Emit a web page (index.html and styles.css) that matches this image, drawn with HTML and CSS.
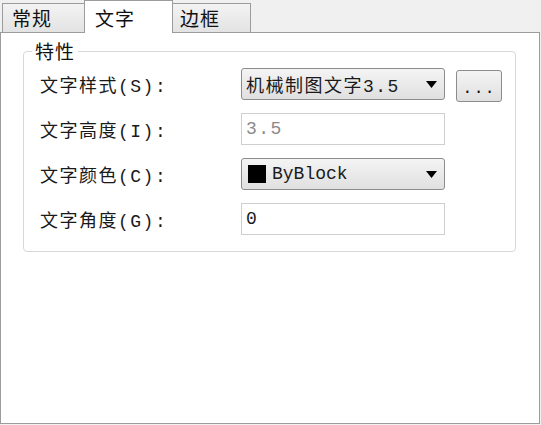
FILE: index.html
```html
<!DOCTYPE html>
<html lang="zh-CN">
<head>
<meta charset="utf-8">
<title>文字</title>
<link rel="stylesheet" href="styles.css">
</head>
<body>
<div class="dialog">
  <div class="tabs">
    <div class="tab tab-general">常规</div>
    <div class="tab tab-text active">文字</div>
    <div class="tab tab-border">边框</div>
  </div>
  <div class="panel">
    <fieldset class="group">
      <legend class="group-title">特性</legend>
      <div class="form">
        <div class="label">文字样式(S):</div>
        <div class="combo"><span class="combo-text">机械制图文字3.5</span><svg class="arrow" width="11" height="7" viewBox="0 0 11 7"><path d="M0 0H11L5.5 7Z" fill="#000"/></svg></div>
        <button class="more">...</button>

        <div class="label">文字高度(I):</div>
        <div class="textbox disabled">3.5</div>
        <div></div>

        <div class="label">文字颜色(C):</div>
        <div class="combo"><span class="swatch"></span><span class="combo-text mono">ByBlock</span><svg class="arrow" width="11" height="7" viewBox="0 0 11 7"><path d="M0 0H11L5.5 7Z" fill="#000"/></svg></div>
        <div></div>

        <div class="label">文字角度(G):</div>
        <div class="textbox">0</div>
        <div></div>
      </div>
    </fieldset>
  </div>
</div>
</body>
</html>
```

FILE: styles.css
```css
html, body {
  margin: 0;
  padding: 0;
  background: #f0f0f0;
}
body {
  width: 541px;
  height: 425px;
  overflow: hidden;
  font-family: "Liberation Mono", "Noto Sans CJK SC", monospace;
  color: #1a1a1a;
}
.dialog {
  width: 540px;
}
.tabs {
  display: flex;
  align-items: flex-end;
  height: 32px;
  padding-left: 2px;
  position: relative;
  z-index: 1;
}
.tab {
  box-sizing: border-box;
  height: 29px;
  border: 1px solid #9c9c9c;
  border-bottom: none;
  background: linear-gradient(#f3f3f3, #e3e3e3);
  font-family: "Noto Sans CJK SC", sans-serif;
  font-size: 19px;
  line-height: 22px;
  padding-top: 3px;
  letter-spacing: 1px;
  color: #111;
}
.tab-general {
  width: 83px;
  padding-left: 9px;
}
.tab-text {
  width: 89px;
  margin-left: -1px;
  padding-left: 10px;
}
.tab-border {
  width: 79px;
  margin-left: -1px;
  padding-left: 7px;
}
.tab.active {
  height: 33px;
  margin-bottom: -1px;
  background: #fff;
  padding-top: 6px;
  position: relative;
  z-index: 2;
}
.panel {
  box-sizing: border-box;
  height: 392px;
  background: #fff;
  border: 1px solid #9c9c9c;
  padding: 6px 0 0 22px;
}
.group {
  box-sizing: border-box;
  width: 493px;
  margin: 0;
  padding: 0 8px 16px 8px;
  border: 1px solid #d8d8d8;
  border-radius: 4px;
}
.group-title {
  padding: 0 3px;
  font-family: "Noto Sans CJK SC", sans-serif;
  font-size: 19px;
  line-height: 24px;
  letter-spacing: 1px;
  color: #111;
}
.form {
  display: grid;
  grid-template-columns: 190px 204px 46px;
  grid-auto-rows: 32px;
  row-gap: 13px;
  column-gap: 11px;
  align-items: center;
  padding: 5px 0 0 8px;
}
.label {
  font-size: 18px;
  letter-spacing: 1.5px;
  white-space: nowrap;
}
.combo {
  box-sizing: border-box;
  height: 32px;
  display: flex;
  align-items: center;
  border: 1px solid #8c8c8c;
  border-radius: 3px;
  background: linear-gradient(#f4f4f4, #e0e0e0);
  padding: 0 6px 0 4px;
}
.combo-text {
  flex: 1;
  font-size: 18px;
  letter-spacing: 1.5px;
  white-space: nowrap;
}
.combo-text.mono {
  letter-spacing: 0;
}
.arrow {
  flex: none;
  margin-right: 1px;
}
.swatch {
  width: 18px;
  height: 18px;
  background: #000;
  margin: 0 6px 0 2px;
  flex: none;
}
.more {
  box-sizing: border-box;
  height: 32px;
  width: 46px;
  border: 1px solid #8c8c8c;
  border-radius: 3px;
  background: linear-gradient(#f4f4f4, #e0e0e0);
  font-family: "Liberation Mono", monospace;
  font-size: 17px;
  letter-spacing: 1px;
  padding: 4px 0 0;
  margin-top: 4px;
  color: #111;
}
.textbox {
  box-sizing: border-box;
  height: 32px;
  border: 1px solid #cfcfcf;
  background: #fff;
  font-size: 18px;
  line-height: 30px;
  padding-left: 4px;
  letter-spacing: 1.5px;
}
.textbox.disabled {
  color: #8a8a8a;
}
```
